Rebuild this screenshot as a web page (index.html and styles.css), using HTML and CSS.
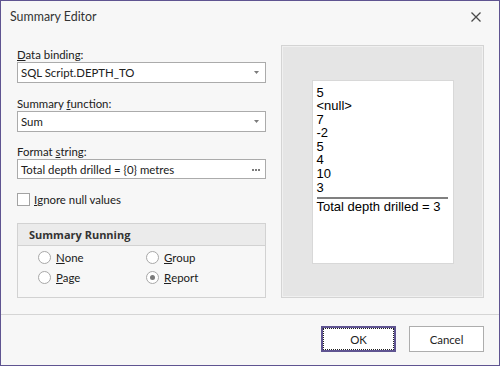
FILE: index.html
```html
<!DOCTYPE html>
<html>
<head>
	<title>Summary Editor</title>
	<link rel="stylesheet" href="styles.css">
</head>
<body>
	<div class="dialog">
		<div class="titlebar">
			<span class="title">Summary Editor</span>
			<svg class="close" width="10" height="10" viewBox="0 0 10 10">
				<path d="M0.5 0.5 L9.5 9.5 M9.5 0.5 L0.5 9.5" stroke="#4a4a4a" stroke-width="1.3" fill="none"/>
			</svg>
		</div>

		<div class="content">
			<div class="fields">
				<label class="caption first"><u>D</u>ata binding:</label>
				<div class="editor">
					<span class="value">SQL Script.DEPTH_TO</span>
					<svg class="arrow" width="5" height="3" viewBox="0 0 5 3"><path d="M0 0 H5 L2.5 3 Z" fill="#7b7b7b"/></svg>
				</div>

				<label class="caption">Summary <u>f</u>unction:</label>
				<div class="editor">
					<span class="value">Sum</span>
					<svg class="arrow" width="5" height="3" viewBox="0 0 5 3"><path d="M0 0 H5 L2.5 3 Z" fill="#7b7b7b"/></svg>
				</div>

				<label class="caption third">Format <u>s</u>tring:</label>
				<div class="editor short">
					<span class="value">Total depth drilled = {0} metres</span>
					<svg class="dots" width="8" height="2" viewBox="0 0 8 2">
						<rect x="0" y="0" width="2" height="2" fill="#7b7b7b"/>
						<rect x="3" y="0" width="2" height="2" fill="#7b7b7b"/>
						<rect x="6" y="0" width="2" height="2" fill="#7b7b7b"/>
					</svg>
				</div>

				<label class="check"><span class="box"></span><u>I</u>gnore null values</label>

				<div class="group">
					<div class="group-head">Summary Running</div>
					<div class="group-body">
						<label class="radio"><span class="circle"></span><u>N</u>one</label>
						<label class="radio"><span class="circle"></span><u>G</u>roup</label>
						<label class="radio"><span class="circle"></span><u>P</u>age</label>
						<label class="radio"><span class="circle checked"></span><u>R</u>eport</label>
					</div>
				</div>
			</div>

			<div class="preview">
				<div class="page">
					<div class="line">5</div>
					<div class="line">&lt;null&gt;</div>
					<div class="line">7</div>
					<div class="line">-2</div>
					<div class="line">5</div>
					<div class="line">4</div>
					<div class="line">10</div>
					<div class="line">3</div>
					<div class="rule"></div>
					<div class="line">Total depth drilled = 3</div>
				</div>
			</div>
		</div>

		<div class="footer">
			<button class="button default">OK</button>
			<button class="button">Cancel</button>
		</div>
	</div>
</body>
</html>
```

FILE: styles.css
```css
body {
	margin: 0;
	font-family: Lato, "Noto Sans", sans-serif;
	font-size: 11.4px;
	color: #202020;
}
.dialog {
	box-sizing: border-box;
	width: 500px;
	height: 366px;
	border: 1px solid #5f5491;
	background: #f7f7f7;
	display: flex;
	flex-direction: column;
}

/* title bar */
.titlebar {
	height: 31px;
	padding: 0 18px 0 9px;
	display: flex;
	align-items: center;
	justify-content: space-between;
}
.title {
	font-size: 12.4px;
	color: #333;
}

/* main area */
.content {
	flex: 1;
	display: flex;
	padding: 13px 15px 0 16px;
}
.fields {
	width: 249px;
	margin-right: 15px;
	display: flex;
	flex-direction: column;
}
.caption {
	display: block;
	line-height: 15px;
	margin-top: 13px;
}
.caption.first { margin-top: 2px; }
.caption.third { margin-top: 12px; }
.editor {
	box-sizing: border-box;
	height: 21px;
	border: 1px solid #ababab;
	background: #fff;
	display: flex;
	align-items: center;
	justify-content: space-between;
	padding: 0 5px 0 3px;
}
.editor.short { height: 20px; }
.editor .arrow { margin-right: 1px; }
.editor .dots { margin-top: 1px; }

.check {
	display: flex;
	align-items: center;
	margin-top: 13px;
	height: 15px;
}
.box {
	box-sizing: border-box;
	width: 13px;
	height: 13px;
	border: 1px solid #a3a3a3;
	background: #fff;
	margin-right: 4px;
}

.group {
	margin-top: 16px;
	border: 1px solid #d2d2d2;
}
.group-head {
	height: 21px;
	line-height: 21px;
	padding-left: 11px;
	background: #ebebeb;
	border-bottom: 1px solid #d2d2d2;
	font-family: "Open Sans", sans-serif;
	font-size: 11px;
	font-weight: bold;
	color: #333;
}
.group-body {
	display: grid;
	grid-template-columns: 108px 1fr;
	padding: 1px 0 10px 20px;
}
.radio {
	display: flex;
	align-items: center;
	height: 20px;
}
.circle {
	box-sizing: border-box;
	width: 13px;
	height: 13px;
	border: 1px solid #a8a8a8;
	border-radius: 50%;
	background: #fff;
	margin-right: 5px;
	display: flex;
	align-items: center;
	justify-content: center;
}
.circle.checked::after {
	content: "";
	width: 5px;
	height: 5px;
	border-radius: 50%;
	background: #7a7a7a;
}

/* preview */
.preview {
	box-sizing: border-box;
	width: 203px;
	height: 253px;
	border: 1px solid #d4d4d4;
	box-shadow: inset 0 0 0 1px #f0f0f0;
	background: #e5e5e5;
	display: flex;
	align-items: center;
	justify-content: center;
}
.page {
	box-sizing: border-box;
	width: 142px;
	height: 184px;
	background: #fff;
	border: 1px solid #d8d8d8;
	padding: 5px 4px 0 4px;
	font-family: "Liberation Sans", Arial, sans-serif;
	font-size: 13px;
	color: #000;
}
.line { line-height: 13.6px; }
.rule {
	height: 2px;
	background: #808080;
	margin: 3px 1px 1px 0;
}

/* buttons */
.footer {
	height: 51px;
	box-sizing: border-box;
	border-top: 1px solid #d5d5d5;
	padding: 11px 15px 0 0;
	display: flex;
	justify-content: flex-end;
	align-items: flex-start;
	gap: 13px;
}
.button {
	box-sizing: border-box;
	width: 75px;
	height: 26px;
	border: 1px solid #adadad;
	background: #fff;
	font-family: inherit;
	font-size: 11.4px;
	color: #222;
	padding: 0;
}
.button.default {
	border: 2px solid #5f5491;
	outline: 1px dotted #222;
	outline-offset: -3px;
}
```
